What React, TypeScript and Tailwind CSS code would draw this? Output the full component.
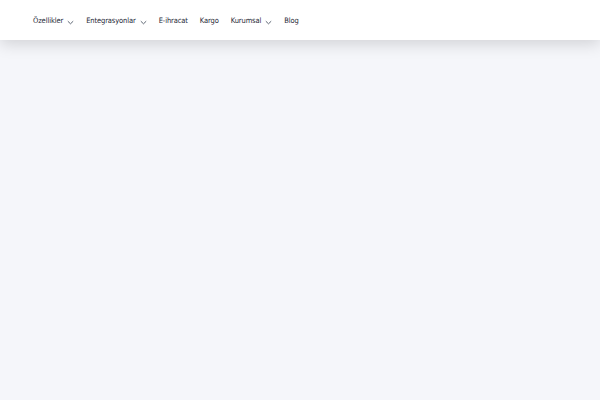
import React from 'react';

const items = [
  { label: 'Özellikler', caret: true },
  { label: 'Entegrasyonlar', caret: true },
  { label: 'E-ihracat', caret: false },
  { label: 'Kargo', caret: false },
  { label: 'Kurumsal', caret: true },
  { label: 'Blog', caret: false },
];

const Caret = () => (
  <svg width="7" height="5" viewBox="0 0 7 5" fill="none" className="ml-[4px] mt-[2px]">
    <path d="M0.8 1.2 L3.5 3.8 L6.2 1.2" stroke="#4b5563" strokeWidth="0.9" />
  </svg>
);

export default function App() {
  return (
    <div className="min-h-[400px] w-full bg-[#f5f6fa]" style={{ fontFamily: '"DejaVu Sans Condensed", "DejaVu Sans", sans-serif' }}>
      <header className="h-[40px] bg-white shadow-[0_4px_16px_rgba(0,0,0,0.15)] flex items-center pl-[33px] pt-[2px]">
        <nav className="flex items-center gap-[12px] text-[7.5px] tracking-[-0.12px] text-[#1f2937]">
          {items.map((it) => (
            <a key={it.label} className="flex items-center">
              <span>{it.label}</span>
              {it.caret && <Caret />}
            </a>
          ))}
        </nav>
      </header>
    </div>
  );
}
